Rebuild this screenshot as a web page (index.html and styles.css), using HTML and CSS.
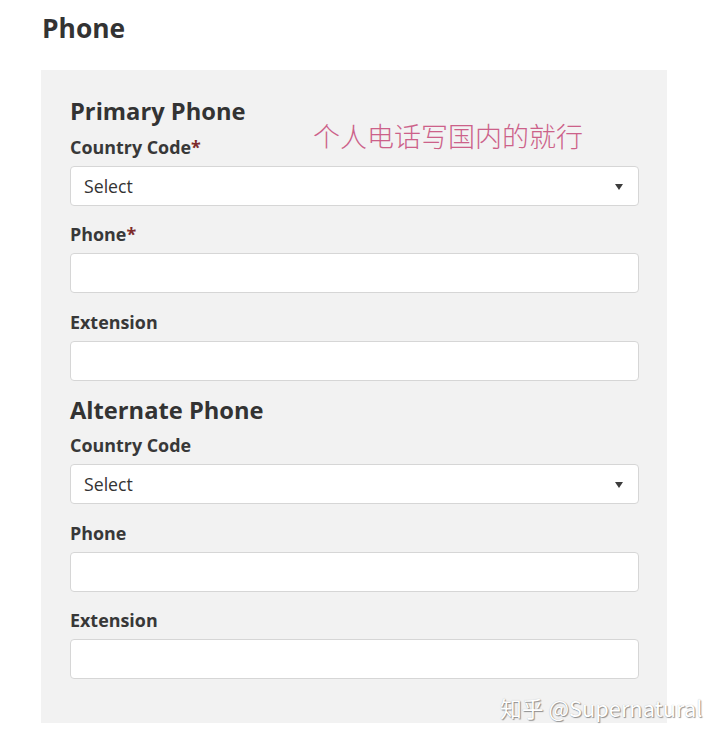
FILE: index.html
```html
<!DOCTYPE html>
<html lang="en">
<head>
<meta charset="utf-8">
<title>Phone</title>
<link rel="stylesheet" href="styles.css">
</head>
<body>
<div class="page">
  <h1 class="title">Phone</h1>
  <div class="panel">
    <h2 class="section">Primary Phone</h2>
    <div class="field">
      <label class="label">Country Code<span class="req">*</span></label>
      <div class="select"><span>Select</span><span class="caret"></span></div>
    </div>
    <div class="field">
      <label class="label">Phone<span class="req">*</span></label>
      <input class="input" type="text">
    </div>
    <div class="field">
      <label class="label">Extension</label>
      <input class="input" type="text">
    </div>

    <h2 class="section alt">Alternate Phone</h2>
    <div class="field">
      <label class="label">Country Code</label>
      <div class="select"><span>Select</span><span class="caret"></span></div>
    </div>
    <div class="field">
      <label class="label">Phone</label>
      <input class="input" type="text">
    </div>
    <div class="field last">
      <label class="label">Extension</label>
      <input class="input" type="text">
    </div>

    <div class="note">个人电话写国内的就行</div>
  </div>
  <div class="watermark">知乎 @Supernatural</div>
</div>
</body>
</html>
```

FILE: styles.css
```css
* { box-sizing: border-box; }
html, body {
  margin: 0;
  padding: 0;
  background: #ffffff;
}
body {
  font-family: "Open Sans", "Noto Sans CJK SC", sans-serif;
  color: #333333;
}
.page {
  position: relative;
  width: 720px;
  height: 741px;
  padding-top: 9.5px;
  overflow: hidden;
}
.title {
  margin: 0 0 24.5px 42px;
  font-size: 26.4px;
  line-height: 36px;
  font-weight: 700;
  color: #333333;
}
.panel {
  position: relative;
  margin-left: 41px;
  width: 626px;
  height: 653px;
  background: #f2f2f2;
  padding: 26px 28px 0 29px;
  display: flex;
  flex-direction: column;
}
.section {
  margin: 0 0 9.5px 0;
  font-size: 23.7px;
  line-height: 30px;
  font-weight: 700;
  color: #333333;
}
.section.alt {
  margin-top: -3.5px;
}
.field {
  display: flex;
  flex-direction: column;
  margin-bottom: 17.5px;
}
.label {
  font-size: 17.9px;
  line-height: 23px;
  font-weight: 700;
  color: #383838;
  margin-bottom: 7px;
}
.req {
  color: #7d2b2b;
}
.select,
.input {
  height: 40px;
  width: 100%;
  background: #ffffff;
  border: 1px solid #d6d6d6;
  border-radius: 4px;
}
.input {
  display: block;
  margin: 0;
  padding: 0 14px;
  font: inherit;
  outline: none;
}
.select {
  display: flex;
  align-items: center;
  justify-content: space-between;
  padding: 0 15px 0 13px;
  font-size: 17.7px;
  color: #333333;
}
.caret {
  width: 0;
  height: 0;
  border-left: 4.5px solid transparent;
  border-right: 4.5px solid transparent;
  border-top: 6px solid #3c3c3c;
  margin-top: 2px;
}
.note {
  position: absolute;
  left: 272px;
  top: 50px;
  font-family: "Noto Sans CJK SC", sans-serif;
  font-size: 27px;
  line-height: 32px;
  font-weight: 300;
  color: #cc6189;
  white-space: nowrap;
}
.watermark {
  position: absolute;
  left: 500px;
  top: 694px;
  font-family: "Noto Sans CJK SC", "Open Sans", sans-serif;
  font-size: 21.8px;
  line-height: 28px;
  color: #ffffff;
  text-shadow: 1px 1px 1px rgba(0, 0, 0, 0.4), 0 0 1px rgba(0, 0, 0, 0.25);
  white-space: nowrap;
}
```
